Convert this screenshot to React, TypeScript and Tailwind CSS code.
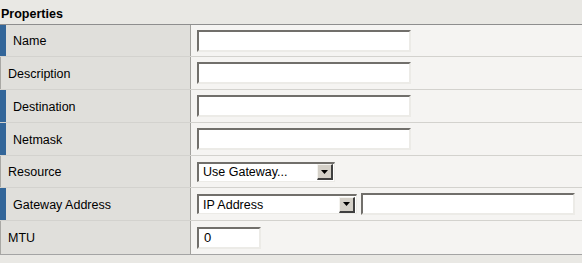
import React from "react";

const Tri = () => (
  <svg width="7" height="4" viewBox="0 0 7 4" className="block">
    <path d="M0 0H7L3.5 4Z" fill="#000" />
  </svg>
);

function TextInput({ w, value }: { w: string; value?: string }) {
  return (
    <div
      className={`${w} h-[22px] bg-white border-t-2 border-l-2 border-r-2 border-b-2 border-t-[#716f6b] border-l-[#716f6b] border-r-[#ecebe7] border-b-[#ecebe7] flex items-center pl-[5px] pt-[1px] text-[13px] text-black`}
    >
      {value}
    </div>
  );
}

function Select({ w, value }: { w: string; value: string }) {
  return (
    <div
      className={`${w} h-[20px] bg-white border-t-2 border-l-2 border-r border-b border-t-[#716f6b] border-l-[#716f6b] border-r-[#ecebe7] border-b-[#ecebe7] flex items-center text-[12.5px] text-black`}
    >
      <span className="flex-1 pl-[4px] pt-[1px] leading-none">{value}</span>
      <div className="w-[16px] h-[16px] mr-[1px] bg-[#d4d0c8] border-t border-l border-r-2 border-b-2 border-t-[#f4f3ef] border-l-[#f4f3ef] border-r-[#404040] border-b-[#404040] flex items-center justify-center">
        <Tri />
      </div>
    </div>
  );
}

type Row = { label: string; accent: boolean; h: string; content: React.ReactNode };

export default function App() {
  const rows: Row[] = [
    { label: "Name", accent: true, h: "h-[32px]", content: <TextInput w="w-[214px]" /> },
    { label: "Description", accent: false, h: "h-[33px]", content: <TextInput w="w-[214px]" /> },
    { label: "Destination", accent: true, h: "h-[33px]", content: <TextInput w="w-[214px]" /> },
    { label: "Netmask", accent: true, h: "h-[33px]", content: <TextInput w="w-[214px]" /> },
    { label: "Resource", accent: false, h: "h-[32px]", content: <Select w="w-[138px]" value="Use Gateway..." /> },
    {
      label: "Gateway Address",
      accent: true,
      h: "h-[33px]",
      content: (
        <div className="flex items-center gap-[4px]">
          <Select w="w-[160px]" value="IP Address" />
          <TextInput w="w-[214px]" />
        </div>
      ),
    },
    { label: "MTU", accent: false, h: "h-[33px]", content: <TextInput w="w-[64px]" value="0" /> },
  ];
  return (
    <div
      className="w-[582px] h-[263px] bg-[#e9e8e4] overflow-hidden text-black"
      style={{ fontFamily: "'Liberation Sans', Arial, sans-serif" }}
    >
      <div className="h-[24px] pl-[1px] pt-[7px] text-[12.5px] font-bold leading-[14px]">Properties</div>
      <div className="border-t border-[#8e8e8e] border-b border-b-[#a4a4a4]">
        {rows.map((r, i) => (
          <div
            key={r.label}
            className={`flex ${r.h} ${i < rows.length - 1 ? "border-b border-[#d3d2ce]" : ""}`}
          >
            <div
              className={`w-[191px] shrink-0 bg-[#e0dfdb] border-r border-r-[#a2a19d] flex items-center pt-[2px] text-[12.5px] ${
                r.accent ? "border-l-[6px] border-l-[#336699] pl-[7px]" : "border-l border-l-[#a9a8a4] pl-[7px]"
              }`}
            >
              {r.label}
            </div>
            <div className="flex-1 bg-[#f5f4f2] flex items-center pl-[6px]">{r.content}</div>
          </div>
        ))}
      </div>
    </div>
  );
}
